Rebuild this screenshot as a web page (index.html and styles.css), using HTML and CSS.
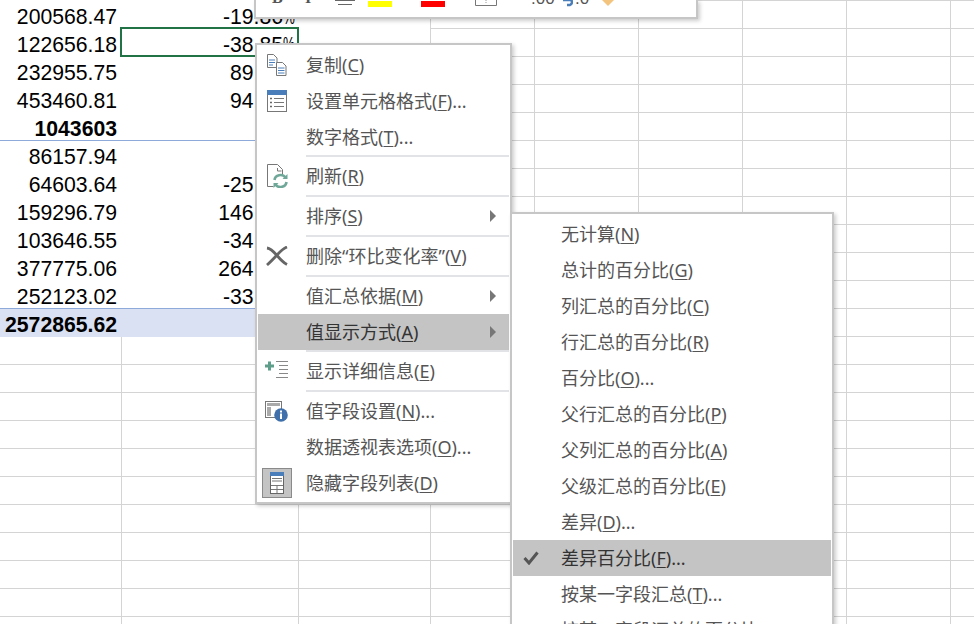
FILE: index.html
```html
<!DOCTYPE html>
<html lang="zh-CN">
<head>
   <meta charset="UTF-8">
   <meta name="viewport" content="width=device-width, initial-scale=1.0">
   <title>数据透视表</title>
   <link rel="stylesheet" href="styles.css">
</head>
<body>
   <div class="pivot">
      <div class="row"><div class="num">200568.47</div><div class="rate">-19.86<span class="pct">%</span></div></div>
      <div class="row"><div class="num">122656.18</div><div class="rate selected">-38.85<span class="pct">%</span></div></div>
      <div class="row"><div class="num">232955.75</div><div class="rate">89.93<span class="pct">%</span></div></div>
      <div class="row"><div class="num">453460.81</div><div class="rate">94.66<span class="pct">%</span></div></div>
      <div class="row"><div class="num bold">1043603</div><div class="rate"></div></div>
      <div class="row group-start"><div class="num">86157.94</div><div class="rate"></div></div>
      <div class="row"><div class="num">64603.64</div><div class="rate">-25.02<span class="pct">%</span></div></div>
      <div class="row"><div class="num">159296.79</div><div class="rate">146.58<span class="pct">%</span></div></div>
      <div class="row"><div class="num">103646.55</div><div class="rate">-34.93<span class="pct">%</span></div></div>
      <div class="row"><div class="num">377775.06</div><div class="rate">264.49<span class="pct">%</span></div></div>
      <div class="row"><div class="num">252123.02</div><div class="rate">-33.26<span class="pct">%</span></div></div>
      <div class="row total"><div class="num bold">2572865.62</div><div class="rate"></div></div>
   </div>

   <div class="toolbar">
      <span class="tb-b">B</span>
      <span class="tb-i">I</span>
      <svg class="tb-align" width="20" height="6" viewBox="0 0 20 6"><path d="M0 .5h20M3 4.500h14" stroke="#666"/></svg>
      <span class="swatch swatch-yellow"></span>
      <span class="swatch swatch-red"></span>
      <svg class="tb-border" width="22" height="6" viewBox="0 0 22 6"><path d="M.5 0v5.500h21V0" fill="none" stroke="#777"/><path d="M11 0v4" stroke="#999" stroke-dasharray="1 1"/></svg>
      <span class="tb-dec">.00</span>
      <svg class="tb-arrow" width="10" height="7" viewBox="0 0 10 7"><path d="M0 0h7q2 0 2 2t-2 3H4" fill="none" stroke="#4a7ebb" stroke-width="2.400"/></svg>
      <span class="tb-dec tb-dec2">.0</span>
      <svg class="tb-brush" width="12" height="6" viewBox="0 0 12 6"><path d="M0 0h12L6 6z" fill="#f2c47e"/></svg>
   </div>

   <div class="menu main-menu">
      <div class="item">
         <span class="ico">
            <svg width="20" height="22" viewBox="0 0 20 22"><path d="M.5.5h6l3.500 3.500v9.500h-9.500z" fill="#fff" stroke="#777"/><path d="M2 6h6M2 8.500h6M2 11h4" stroke="#4a7ebb"/><path d="M9.500 8.500h6l3.500 3.500v9.500h-9.500z" fill="#fff" stroke="#777"/><path d="M11 14h6.500M11 16.500h6.500M11 19h6.500" stroke="#4a7ebb"/></svg>
         </span>
         <span class="label">复制(<u>C</u>)</span>
      </div>
      <div class="item">
         <span class="ico">
            <svg width="20" height="22" viewBox="0 0 20 22"><rect x=".5" y=".5" width="19" height="21" fill="#fff" stroke="#777"/><rect width="20" height="5" fill="#4a7ebb"/><path d="M7 8.500h10M7 12.500h10M7 16.500h10" stroke="#777"/><path d="M3 8.500h2M3 12.500h2M3 16.500h2" stroke="#666" stroke-width="1.500"/></svg>
         </span>
         <span class="label">设置单元格格式(<u>F</u>)...</span>
      </div>
      <div class="item">
         <span class="ico"></span>
         <span class="label">数字格式(<u>T</u>)...</span>
      </div>
      <div class="sep flush"></div>
      <div class="item">
         <span class="ico">
            <svg width="22" height="24" viewBox="0 0 22 24"><path d="M1.500 22.500v-22h10l5 5v5M1.500 22.500h6" fill="none" stroke="#777"/><path d="M11.500 4v3h4" fill="none" stroke="#777"/><path d="M8.500 16a6 5.500 0 0 1 11-2.500M20.500 18a6 5.500 0 0 1-11 2.500" fill="none" stroke="#6fa899" stroke-width="2.600"/><path d="M21.500 10v5h-5zM7.500 24v-5h5z" fill="#6fa899"/></svg>
         </span>
         <span class="label">刷新(<u>R</u>)</span>
      </div>
      <div class="sep"></div>
      <div class="item">
         <span class="ico"></span>
         <span class="label">排序(<u>S</u>)</span>
         <span class="arrow"></span>
      </div>
      <div class="sep"></div>
      <div class="item">
         <span class="ico">
            <svg width="24" height="20" viewBox="0 0 24 20"><path d="M2 2q4 .5 10 7.500t10 9M22 1q-4 1.500-10 8t-10 10" fill="none" stroke="#666" stroke-width="2.800"/></svg>
         </span>
         <span class="label">删除“环比变化率”(<u>V</u>)</span>
      </div>
      <div class="sep"></div>
      <div class="item">
         <span class="ico"></span>
         <span class="label">值汇总依据(<u>M</u>)</span>
         <span class="arrow"></span>
      </div>
      <div class="item active">
         <span class="ico"></span>
         <span class="label">值显示方式(<u>A</u>)</span>
         <span class="arrow"></span>
      </div>
      <div class="sep flush"></div>
      <div class="item">
         <span class="ico">
            <svg width="23" height="20" viewBox="0 0 23 20"><path d="M0 5h9M4.500 .5v9" stroke="#5f9e8a" stroke-width="3"/><path d="M11 .5h12M14 4.500h9M14 8.500h9M14 12.500h9M11 16.500h12" stroke="#888"/></svg>
         </span>
         <span class="label">显示详细信息(<u>E</u>)</span>
      </div>
      <div class="sep"></div>
      <div class="item">
         <span class="ico">
            <svg width="23" height="21" viewBox="0 0 23 21"><rect x=".5" y=".5" width="16" height="16" fill="#fff" stroke="#777"/><rect x="2" y="2" width="13" height="3" fill="#aaa"/><rect x="2" y="6" width="4" height="9" fill="#aaa"/><circle cx="16" cy="14" r="6.800" fill="#3f70ab"/><path d="M16 9.500v2M16 12.500v5.500" stroke="#fff" stroke-width="2"/></svg>
         </span>
         <span class="label">值字段设置(<u>N</u>)...</span>
      </div>
      <div class="item">
         <span class="ico"></span>
         <span class="label">数据透视表选项(<u>O</u>)...</span>
      </div>
      <div class="item">
         <span class="ico">
            <span class="checked">
               <svg width="14" height="22" viewBox="0 0 14 22"><rect x=".5" y=".5" width="13" height="21" fill="#fff" stroke="#666"/><rect width="14" height="4" fill="#4a7ebb"/><path d="M2 6.500h10M2 9h10M1 13.500h12M1 17.500h12M7 13v8" stroke="#777"/></svg>
            </span>
         </span>
         <span class="label">隐藏字段列表(<u>D</u>)</span>
      </div>
   </div>

   <div class="menu sub-menu">
      <div class="item"><span class="ico"></span><span class="label">无计算(<u>N</u>)</span></div>
      <div class="item"><span class="ico"></span><span class="label">总计的百分比(<u>G</u>)</span></div>
      <div class="item"><span class="ico"></span><span class="label">列汇总的百分比(<u>C</u>)</span></div>
      <div class="item"><span class="ico"></span><span class="label">行汇总的百分比(<u>R</u>)</span></div>
      <div class="item"><span class="ico"></span><span class="label">百分比(<u>O</u>)...</span></div>
      <div class="item"><span class="ico"></span><span class="label">父行汇总的百分比(<u>P</u>)</span></div>
      <div class="item"><span class="ico"></span><span class="label">父列汇总的百分比(<u>A</u>)</span></div>
      <div class="item"><span class="ico"></span><span class="label">父级汇总的百分比(<u>E</u>)</span></div>
      <div class="item"><span class="ico"></span><span class="label">差异(<u>D</u>)...</span></div>
      <div class="item active">
         <span class="ico">
            <svg width="16" height="14" viewBox="0 0 16 14"><path d="M1.500 7l4.500 5L14.500 1.500" fill="none" stroke="#555" stroke-width="3"/></svg>
         </span>
         <span class="label">差异百分比(<u>F</u>)...</span>
      </div>
      <div class="item"><span class="ico"></span><span class="label">按某一字段汇总(<u>T</u>)...</span></div>
      <div class="item"><span class="ico"></span><span class="label">按某一字段汇总的百分比(<u>U</u>)...</span></div>
   </div>
</body>
</html>
```

FILE: styles.css
```css
html, body {
   margin: 0;
   height: 624px;
   overflow: hidden;
}
body {
   background-color: #fff;
   background-image:
      linear-gradient(#d4d4d4, #d4d4d4), linear-gradient(#d4d4d4, #d4d4d4),
      linear-gradient(#d4d4d4, #d4d4d4), linear-gradient(#d4d4d4, #d4d4d4),
      linear-gradient(#d4d4d4, #d4d4d4), linear-gradient(#d4d4d4, #d4d4d4),
      linear-gradient(#d4d4d4, #d4d4d4), linear-gradient(#d4d4d4, #d4d4d4),
      repeating-linear-gradient(to bottom, #d4d4d4 0, #d4d4d4 1px, transparent 1px, transparent 28px);
   background-size:
      1px 100%, 1px 100%, 1px 100%, 1px 100%,
      1px 100%, 1px 100%, 1px 100%, 1px 100%, 100% 100%;
   background-position:
      121px 0, 298px 0, 430px 0, 534px 0,
      638px 0, 742px 0, 846px 0, 950px 0, 0 0;
   background-repeat: no-repeat;
   font-family: "Liberation Sans", Arial, sans-serif;
}

/* pivot table, no gridlines inside */
.pivot {
   width: 430px;
   background: #fff;
}
.row {
   display: grid;
   grid-template-columns: 121px 177px;
   height: 28px;
   box-sizing: border-box;
   font-size: 21.2px;
   line-height: 34px;
   color: #000;
}
.group-start {
   border-top: 1px solid #8eaadb;
}
.total {
   height: 29px;
   background: #d9e1f2;
   border-top: 1px solid #8eaadb;
}
.group-start > div,
.total > div {
   margin-top: -1px;
}
.num,
.rate {
   text-align: right;
   white-space: nowrap;
   height: 28px;
}
.num {
   padding-right: 4px;
}
.rate {
   padding-right: 3px;
}
.bold {
   font-weight: bold;
}
.pct {
   display: inline-block;
   width: 12px;
   text-align: left;
   transform: scaleX(.63);
   transform-origin: left;
}
.selected {
   outline: 2px solid #217346;
   outline-offset: -1px;
}

/* ribbon mini toolbar, only its lower edge is on screen */
.toolbar {
   position: absolute;
   left: 254px;
   top: 0;
   width: 444px;
   height: 19px;
   box-sizing: border-box;
   background: #fff;
   border: 2px solid #c6c6c6;
   border-top: 0;
   box-shadow: 2px 2px 4px rgba(0, 0, 0, .2);
   overflow: hidden;
   display: flex;
   align-items: flex-start;
   color: #555;
}
.tb-b,
.tb-i {
   font-family: "Liberation Serif", serif;
   font-weight: bold;
   font-size: 16px;
   line-height: 16px;
   margin-top: -10px;
}
.tb-b {
   margin-left: 16px;
   width: 13px;
}
.tb-i {
   margin-left: 20px;
   width: 6px;
}
.tb-align {
   margin-left: 24px;
}
.swatch {
   width: 24px;
   height: 6px;
   margin-top: 1px;
}
.swatch-yellow {
   background: #ff0;
   margin-left: 13px;
}
.swatch-red {
   background: #f00;
   margin-left: 29px;
}
.tb-border {
   margin-left: 30px;
}
.tb-dec {
   font-size: 17px;
   line-height: 17px;
   margin-top: -10px;
   margin-left: 34px;
   width: 24px;
}
.tb-arrow {
   margin-left: 8px;
}
.tb-dec2 {
   margin-left: 2px;
   width: 15px;
}
.tb-brush {
   margin-left: 12px;
}

/* context menus */
.menu {
   position: absolute;
   box-sizing: border-box;
   background: #fff;
   border: 2px solid #c6c6c6;
   box-shadow: 2px 2px 4px rgba(0, 0, 0, .2);
   padding: 2px 1px 1px;
   font-family: "Noto Sans", "Noto Sans CJK SC", sans-serif;
   font-size: 18px;
   color: #555;
}
.main-menu {
   left: 255px;
   top: 43px;
   width: 257px;
   height: 461px;
}
.sub-menu {
   left: 510px;
   top: 212px;
   width: 324px;
}
.item {
   display: flex;
   align-items: center;
   height: 36px;
   white-space: nowrap;
}
.item.active {
   background: #c4c4c4;
   color: #333;
}
.ico {
   flex: none;
   width: 37px;
   display: flex;
   align-items: center;
   justify-content: center;
}
.label {
   margin-bottom: 2px;
}
.main-menu .label {
   margin-left: 11px;
}
.sub-menu .ico {
   width: 36px;
}
.sub-menu .label {
   margin-left: 12px;
}
.arrow {
   margin-left: auto;
   margin-right: 13px;
   border-left: 6px solid #777;
   border-top: 6px solid transparent;
   border-bottom: 6px solid transparent;
}
.sep {
   height: 2px;
   margin: 1px 0 1px 48px;
   background: #e1e3e6;
}
.sep.flush {
   margin-top: 0;
}
.checked {
   display: flex;
   align-items: center;
   justify-content: center;
   width: 30px;
   height: 30px;
   box-sizing: border-box;
   background: #c4c4c4;
   border: 1px solid #8a8a8a;
}
u {
   text-underline-offset: 2px;
}
```
